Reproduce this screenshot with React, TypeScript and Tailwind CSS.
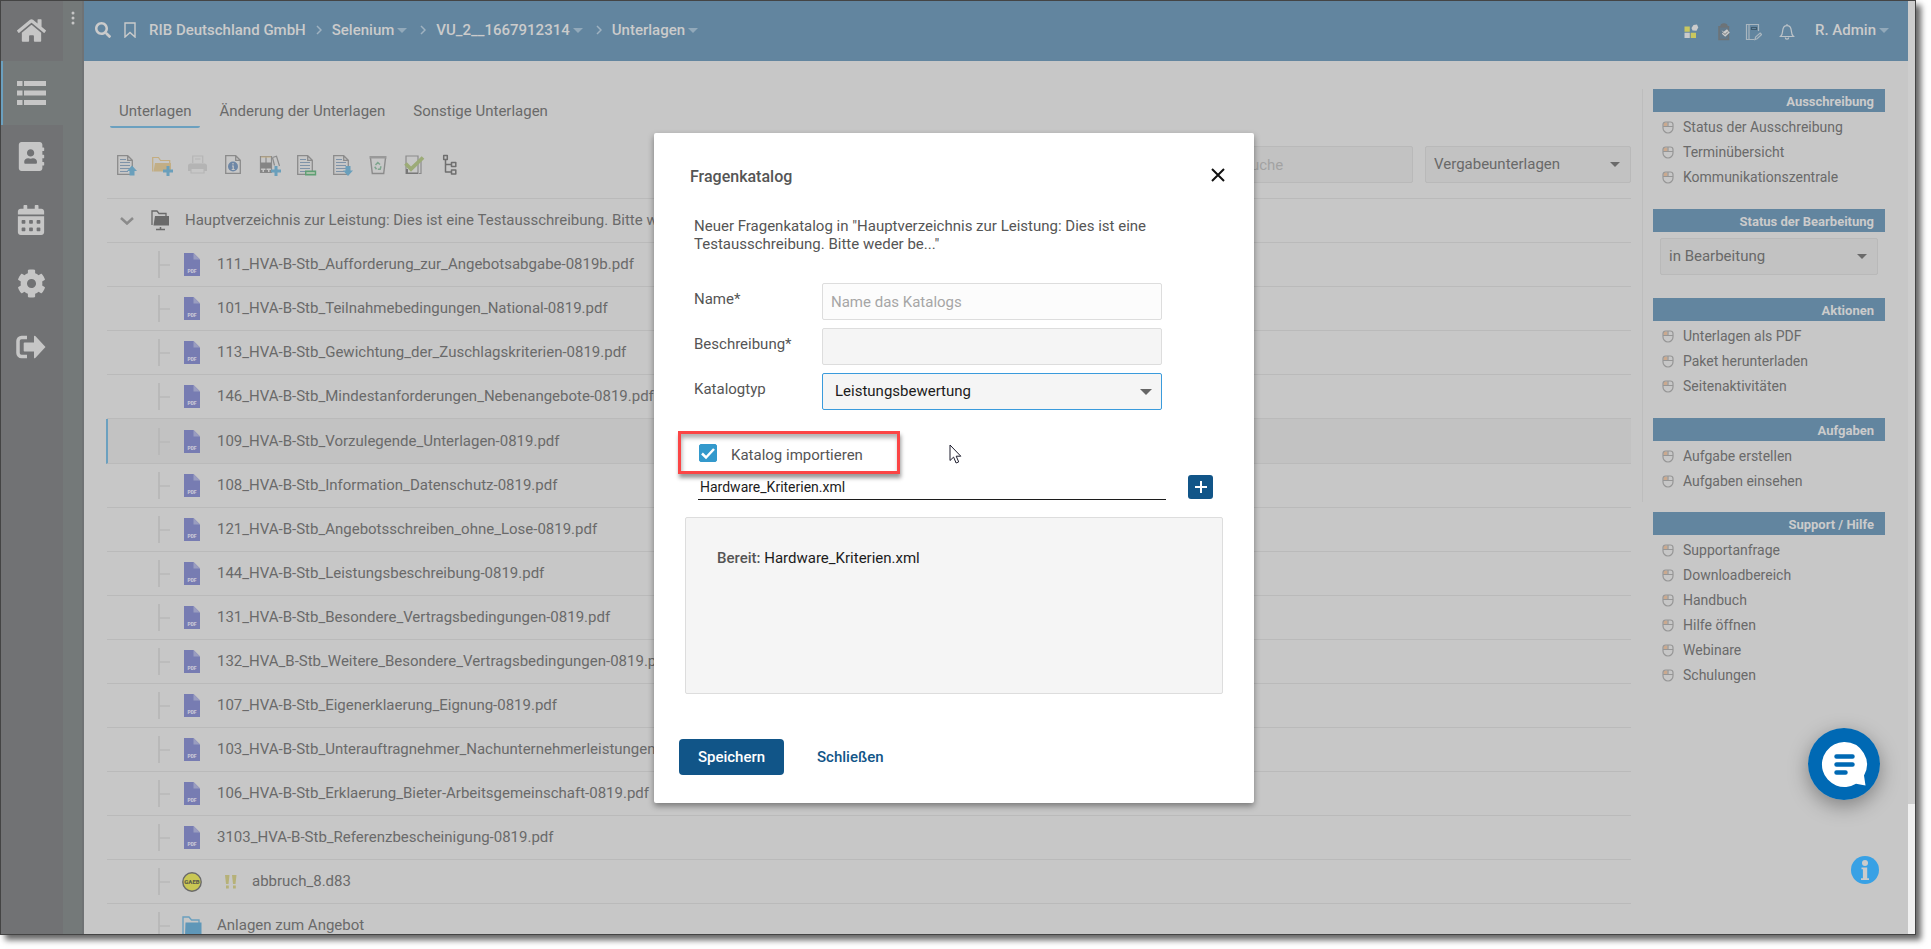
import { useState, type ReactNode } from 'react';
import { FaAddressBook, FaCalendarAlt, FaCog, FaHome, FaSearch } from 'react-icons/fa';

const files = [
  '111_HVA-B-Stb_Aufforderung_zur_Angebotsabgabe-0819b.pdf',
  '101_HVA-B-Stb_Teilnahmebedingungen_National-0819.pdf',
  '113_HVA-B-Stb_Gewichtung_der_Zuschlagskriterien-0819.pdf',
  '146_HVA-B-Stb_Mindestanforderungen_Nebenangebote-0819.pdf',
  '109_HVA-B-Stb_Vorzulegende_Unterlagen-0819.pdf',
  '108_HVA-B-Stb_Information_Datenschutz-0819.pdf',
  '121_HVA-B-Stb_Angebotsschreiben_ohne_Lose-0819.pdf',
  '144_HVA-B-Stb_Leistungsbeschreibung-0819.pdf',
  '131_HVA-B-Stb_Besondere_Vertragsbedingungen-0819.pdf',
  '132_HVA_B-Stb_Weitere_Besondere_Vertragsbedingungen-0819.pdf',
  '107_HVA-B-Stb_Eigenerklaerung_Eignung-0819.pdf',
  '103_HVA-B-Stb_Unterauftragnehmer_Nachunternehmerleistungen-08',
  '106_HVA-B-Stb_Erklaerung_Bieter-Arbeitsgemeinschaft-0819.pdf',
  '3103_HVA-B-Stb_Referenzbescheinigung-0819.pdf',
];

const activeFile = 4;

function Caret({ className }: { className?: string }) {
  return (
    <svg viewBox="0 0 10 5" className={`h-[5px] w-2.5 ${className ?? ''}`}>
      <path d="M0 0h10L5 5z" fill="currentColor" />
    </svg>
  );
}

/* ---------- sidebar ---------- */

function ListIcon() {
  return (
    <svg viewBox="0 0 30 26" className="h-[26px] w-[30px]" fill="currentColor">
      <path d="M1 1h5.500v5H1zM1 10.500h5.500v5H1zM1 20h5.500v5H1zM8 1h22v5H8zM8 10.500h22v5H8zM8 20h22v5H8z" />
    </svg>
  );
}

function LogoutIcon() {
  return (
    <svg viewBox="0 0 30 24" className="h-6 w-[30px]">
      <path d="M11 2.500H5.500A3.500 3.500 0 0 0 2 6v12a3.500 3.500 0 0 0 3.500 3.500H11" fill="none" stroke="currentColor" strokeWidth="3.500" />
      <path d="M8.500 7.500h9.500V1.500q0-1.500 1.300-.4L29.500 12 19.300 22.900q-1.300 1.100-1.300-.4v-6H8.500q-.8 0-.8-.8V8.300q0-.8.800-.8z" fill="currentColor" />
    </svg>
  );
}

function Sidebar() {
  return (
    <div className="flex shrink-0">
      <nav className="flex w-[62px] flex-col bg-[#717274] text-[#c6c6c6]">
        <button aria-label="Start" className="flex h-[60px] items-center justify-center pr-0.5 pb-0.5">
          <FaHome size={29} />
        </button>
        <button aria-label="Liste" className="flex h-16 items-center justify-center border-l-2 border-[#6ba0bf] bg-[#747979] pr-1">
          <ListIcon />
        </button>
        <button aria-label="Adressbuch" className="flex h-[63px] items-center justify-center pr-0.5">
          <FaAddressBook size={29} />
        </button>
        <button aria-label="Kalender" className="flex h-16 items-center justify-center pr-0.5">
          <FaCalendarAlt size={30} />
        </button>
        <button aria-label="Einstellungen" className="flex h-[63px] items-center justify-center pr-0.5">
          <FaCog size={29} />
        </button>
        <button aria-label="Abmelden" className="flex h-[63px] items-center justify-center pr-0.5">
          <LogoutIcon />
        </button>
      </nav>
      <div className="flex w-[21px] justify-center border-r-2 border-[#6f7274] bg-[#747979] pt-2.5 text-[#c6c6c6]">
        <svg viewBox="0 0 4 14" className="h-3.5 w-1" fill="currentColor">
          <circle cx="2" cy="2" r="1.500" />
          <circle cx="2" cy="7" r="1.500" />
          <circle cx="2" cy="12" r="1.500" />
        </svg>
      </div>
    </div>
  );
}

/* ---------- header ---------- */

function CrumbArrow() {
  return (
    <svg viewBox="0 0 6 10" className="h-2.5 w-1.5 text-[#9fb2c0]" fill="none" stroke="currentColor" strokeWidth="1.500">
      <path d="M1 1l4 4-4 4" />
    </svg>
  );
}

function Header() {
  return (
    <header className="flex h-[60px] shrink-0 items-center bg-[#62859f] pr-[19px] pb-0.5 pl-[11px] text-[15px] font-medium text-[#cbcbcb]">
      <button aria-label="Suchen">
        <FaSearch size={16} />
      </button>
      <button aria-label="Lesezeichen" className="ml-3">
        <svg viewBox="0 0 14 16" className="h-4 w-3.5" fill="none" stroke="currentColor" strokeWidth="1.400">
          <path d="M2 1h10v14l-5-4.500L2 15z" />
        </svg>
      </button>
      <nav className="ml-3 flex items-center gap-2.5 whitespace-nowrap">
        <a href="#firma">RIB Deutschland GmbH</a>
        <CrumbArrow />
        <a href="#selenium" className="flex items-center gap-[3px]">
          Selenium <Caret className="mr-[3px] text-[#92a9ba]" />
        </a>
        <CrumbArrow />
        <a href="#vu" className="flex items-center gap-[3px]">
          VU_2__1667912314 <Caret className="mr-[3px] text-[#92a9ba]" />
        </a>
        <CrumbArrow />
        <a href="#unterlagen" className="flex items-center gap-[3px]">
          Unterlagen <Caret className="text-[#92a9ba]" />
        </a>
      </nav>
      <div className="ml-auto flex items-center">
        <button aria-label="Apps" className="mr-[18px] pt-1">
          <svg viewBox="0 0 16 16" className="size-4">
            <path d="M1.500 2.500h5.300v5.300H1.500zM7.700 8.700H13V14H7.700z" fill="#c9c75f" />
            <path d="M1.500 8.700h5.300V14H1.500z" fill="#cbcbcb" />
            <path d="M10.500 1l3.500-.5 1.300 3-1.800 3.300-4-.3-1-2.500z" fill="#cbcbcb" />
          </svg>
        </button>
        <button aria-label="Aufgaben" className="mr-3.5 pt-1">
          <svg viewBox="0 0 14 18" className="h-[18px] w-3.5">
            <path d="M4 3.500V2.800a3 2 0 0 1 6 0v.7" fill="#6d7377" stroke="#6d7377" strokeWidth="1.200" />
            <path d="M2 3.800h9.500v12.700H2z" fill="#62798b" stroke="#6d7377" strokeWidth="1.500" />
            <path d="M4.500 7l2 1.700 3.500-2.400 2.800 3.200-4.600 4.300-3.400-3 1.300-1.200z" fill="#cbcbcb" />
            <path d="M6 9.500l2 2 3-3" fill="none" stroke="#6d7377" />
          </svg>
        </button>
        <button aria-label="Notizen" className="mr-[17px] pt-1">
          <svg viewBox="0 0 17 18" className="h-[18px] w-[17px]" fill="none" stroke="#a9b6bf" strokeWidth="1.200">
            <path d="M13.500 8V1.500h-12v15h8M4 1.500v15" />
            <path d="M6.500 4.500h5v2h-5z" stroke="#3f5a6d" />
            <path d="M10 16.500l.6-2.500 4.500-4 1.500 1.500-4.500 4.300z" />
          </svg>
        </button>
        <button aria-label="Benachrichtigungen" className="mr-5 pt-1">
          <svg viewBox="0 0 16 18" className="h-[18px] w-4" fill="none" stroke="#bcc3c8" strokeWidth="1.200">
            <path d="M8 1v1.500M1.500 13.500c2-1.800 2-3 2.200-6C4 4.500 5.600 2.600 8 2.600s4 1.900 4.300 4.900c.2 3 .2 4.200 2.200 6zM6.300 14.500a1.700 1.700 0 0 0 3.400 0" />
          </svg>
        </button>
        <button className="flex items-center gap-[3px]">
          R. Admin <Caret className="text-[#92a9ba]" />
        </button>
      </div>
    </header>
  );
}

/* ---------- toolbar ---------- */

function Sheet() {
  return (
    <>
      <path d="M2.700 1.700h10l4.600 4.600v14h-14.600zM12.700 1.700v4.600h4.600" fill="none" stroke="#8b8b8b" strokeWidth="1.300" />
      <path d="M5 5.500h6M5 8.500h10M5 11.500h10M5 14.500h10M5 17.500h8" stroke="#7f93a8" strokeWidth="1.200" />
    </>
  );
}

const tools: { label: string; icon: ReactNode }[] = [
  {
    label: 'Hochladen',
    icon: (
      <>
        <Sheet />
        <path d="M17 11.500l5 5.500h-2.500v4.500h-5V17H12z" fill="#6a9fbb" />
      </>
    ),
  },
  {
    label: 'Neuer Ordner',
    icon: (
      <>
        <path d="M1.700 17.500V3.500h5.800l2 3h9.200v2.500" fill="none" stroke="#c4ad80" strokeWidth="1.200" />
        <path d="M4 9h16v8.500H2.500z" fill="#c2ae85" />
        <path d="M15.500 12h3v3.500H22v3h-3.500V22h-3v-3.500H12v-3h3.500z" fill="#6a9fbb" />
      </>
    ),
  },
  {
    label: 'Drucken',
    icon: (
      <>
        <path d="M5.700 9V2h10v7M8 5h5.500" fill="none" stroke="#b6b6b6" strokeWidth="1.200" />
        <path d="M3.500 9.500h14a2.500 2.500 0 0 1 2.500 2.500v5h-3v-2H4v2H1v-5a2.500 2.500 0 0 1 2.500-2.500z" fill="#b4b4b4" />
        <path d="M4 15v4h13v-4" fill="none" stroke="#b6b6b6" strokeWidth="1.200" />
      </>
    ),
  },
  {
    label: 'Information',
    icon: (
      <>
        <path d="M2.700 1.700h10l4.600 4.600v13h-14.600zM12.700 1.700v4.600h4.600" fill="none" stroke="#8b8b8b" strokeWidth="1.300" />
        <circle cx="10" cy="12.500" r="5" fill="#6e87a6" />
        <path d="M10 9v1.500M9 12h1.200v3.500M8.700 15.500h3" stroke="#c7c7c7" strokeWidth="1.200" fill="none" />
      </>
    ),
  },
  {
    label: 'Katalog anlegen',
    icon: (
      <>
        <path d="M1.500 2.500H7v16H1.500zM7 2.500h5.500v16H7z" fill="none" stroke="#8b8b8b" strokeWidth="1.200" />
        <path d="M1.500 8.500h11v6h-11z" fill="#858585" />
        <path d="M1.500 16h2v2.500h-2zM5 16h4v2.500H5zM10.500 16h2v2.500h-2z" fill="#858585" />
        <path d="M2 3h10" stroke="#c4ad80" />
        <path d="M13.500 3.500l4-1.200 3 9.700M13.500 3.500l2 8" fill="none" stroke="#8b8b8b" strokeWidth="1.200" />
        <path d="M15.500 12h3v3.500H22v3h-3.500V22h-3v-3.500H12v-3h3.500z" fill="#6a9fbb" />
      </>
    ),
  },
  {
    label: 'Leistungsverzeichnis',
    icon: (
      <>
        <Sheet />
        <path d="M10.700 17.200h9.800v3.600h-9.800z" fill="#a9c0a9" stroke="#5f9f74" strokeWidth="1.400" />
      </>
    ),
  },
  {
    label: 'Herunterladen',
    icon: (
      <>
        <Sheet />
        <path d="M17 22l5-5.500h-2.500V12h-5v4.500H12z" fill="#6a9fbb" />
      </>
    ),
  },
  {
    label: 'Papierkorb',
    icon: (
      <>
        <path d="M3.500 4l1.800 15.500h11.400L18.500 4" fill="none" stroke="#8b8b8b" strokeWidth="1.400" />
        <path d="M2.500 2h17v2.500h-17z" fill="#999" />
        <path d="M8.500 11l2.300-2.500 2.200 2M14 12.200l-.8 3h-2.400M9.500 15.200l-1.800-2.400" fill="none" stroke="#7ea58e" strokeWidth="1.500" />
      </>
    ),
  },
  {
    label: 'Prüfen',
    icon: (
      <>
        <path d="M3 2h12v17.500H3zM18 6v13.500h-2" fill="none" stroke="#8b8b8b" strokeWidth="1.200" />
        <path d="M3 15h2v4H3zM3 18.500h12V20H3z" fill="#777" />
        <path d="M2.500 9.500L8 15 20 3.500" fill="none" stroke="#9cab77" strokeWidth="3.800" />
      </>
    ),
  },
  {
    label: 'Struktur',
    icon: (
      <path
        d="M4.700 1.500h3.600v4H4.700zM12.500 8.500h4.300v4h-4.300zM12.500 16h4.300v4h-4.300zM6.500 5.500V18h6M6.500 10.500h6"
        fill="none"
        stroke="#6f6f6f"
        strokeWidth="1.500"
        strokeLinejoin="round"
      />
    ),
  },
];

function Toolbar() {
  return (
    <div className="mt-[18px] flex h-[37px] items-center pl-px">
      {tools.map((t) => (
        <button key={t.label} aria-label={t.label} className="flex w-9 justify-center">
          <svg viewBox="0 0 22 22" className="size-[22px]">
            {t.icon}
          </svg>
        </button>
      ))}
      <input
        type="search"
        aria-label="Suche"
        placeholder="Suche"
        className="ml-auto h-full w-[181px] rounded-xs border border-[#b9b9b9] bg-[#c2c2c2] px-[9px] text-[15px] placeholder:text-[#a2a2a2]"
      />
      <div className="relative ml-3 h-full w-[206px]">
        <select
          aria-label="Kategorie"
          className="h-full w-full appearance-none rounded-xs border border-[#b9b9b9] bg-[#c2c2c2] px-2 text-[15px] text-[#696969]"
        >
          <option>Vergabeunterlagen</option>
        </select>
        <Caret className="pointer-events-none absolute top-4 right-[11px] text-[#6a6a6a]" />
      </div>
    </div>
  );
}

/* ---------- tree ---------- */

function Branch() {
  return (
    <svg viewBox="0 0 12 27" className="mr-3 h-[27px] w-3 shrink-0" stroke="#b9b9b9">
      <path d="M1 0v27" strokeWidth="2" />
      <path d="M1 14h11" strokeWidth="1.500" />
    </svg>
  );
}

function PdfIcon() {
  return (
    <svg viewBox="0 0 16 23" className="mx-0.5 h-[23px] w-4 shrink-0">
      <path d="M0 0h9.500L16 6.500V23H0z" fill="#777cb2" />
      <path d="M9.500 0L16 6.500H9.500z" fill="#9a9dc0" />
      <text x="8" y="19.500" textAnchor="middle" fontSize="5" fontWeight="900" fill="#c7c7d6">
        PDF
      </text>
    </svg>
  );
}

function GaebIcon() {
  return (
    <svg viewBox="0 0 20 20" className="size-5 shrink-0">
      <circle cx="10" cy="10" r="9.200" fill="#c9c754" stroke="#6a6a6a" strokeWidth="1.400" />
      <text x="10" y="12.300" textAnchor="middle" fontSize="6" fontWeight="900" fill="#5d5d4a">
        GAEB
      </text>
    </svg>
  );
}

function FileRow({ active, icon, children }: { active?: boolean; icon: ReactNode; children: ReactNode }) {
  return (
    <li
      className={
        active
          ? '-ml-px flex h-[45px] items-center border-b border-l-2 border-b-[#bababa] border-l-[#6ba0bf] bg-[#c2c2c2] pl-[50px]'
          : 'flex h-11 items-center border-b border-[#bababa] pl-[51px]'
      }
    >
      <Branch />
      {icon}
      <a href="#datei" className="ml-[15px]">
        {children}
      </a>
    </li>
  );
}

function Tree() {
  return (
    <ul className="mt-[15px] border-t border-[#bababa] text-[15px] whitespace-nowrap">
      <li className="flex h-11 items-center border-b border-[#bababa] pl-[13px]">
        <button aria-label="Zuklappen">
          <svg viewBox="0 0 14 8" className="h-2 w-3.5" fill="none" stroke="#8b8b8b" strokeWidth="2.500">
            <path d="M1 1l6 5.500L13 1" />
          </svg>
        </button>
        <svg viewBox="0 0 18 21" className="ml-[17px] h-[21px] w-[18px]">
          <path d="M1 15V1h5l2 2.500h7V6" fill="none" stroke="#6a6a6a" strokeWidth="1.300" />
          <path d="M4 6h14v9.500H2.500z" fill="#6a6a6a" />
          <path d="M9.500 17v3M5 19.500h9" stroke="#6a6a6a" strokeWidth="1.500" />
        </svg>
        <a href="#ordner" className="ml-4">
          Hauptverzeichnis zur Leistung: Dies ist eine Testausschreibung. Bitte weder be...
        </a>
      </li>
      {files.map((name, i) => (
        <FileRow key={name} active={i === activeFile} icon={<PdfIcon />}>
          {name}
        </FileRow>
      ))}
      <FileRow
        icon={
          <>
            <GaebIcon />
            <svg viewBox="0 0 12 14" className="ml-[23px] h-3.5 w-3 shrink-0" fill="#b6b178">
              <path d="M0 0h4.500L3.500 9H1zM7 0h4.500l-1 9H8zM1 10.500h2.800V13.500H1zM8 10.500h2.800V13.500H8z" />
            </svg>
          </>
        }
      >
        abbruch_8.d83
      </FileRow>
      <FileRow
        icon={
          <svg viewBox="0 0 20 20" className="size-5 shrink-0">
            <path d="M1 19V1h6l2.500 3H17v3" fill="none" stroke="#6ba0bf" strokeWidth="1.400" />
            <path d="M3.500 6.500H19.500V20H3z" fill="#5f97b8" />
          </svg>
        }
      >
        Anlagen zum Angebot
      </FileRow>
    </ul>
  );
}

/* ---------- right column ---------- */

function MouseIcon() {
  return (
    <svg viewBox="0 0 12 13" className="h-[13px] w-3 shrink-0" fill="none" stroke="#969696" strokeWidth="1.200">
      <path d="M1.500 1.500h4v3.500h-4z" fill="#cba98e" stroke="none" />
      <path d="M3.500 1h5A2.500 2.500 0 0 1 11 3.500V7a5 5 0 0 1-10 0V3.500A2.500 2.500 0 0 1 3.500 1zM1 5.500h10M6 1v4.500" />
    </svg>
  );
}

function Panel({ title, links, children }: { title: string; links?: string[]; children?: ReactNode }) {
  return (
    <section>
      <h2 className="h-[23px] bg-[#62859f] pr-[11px] text-right text-[13px] leading-[25px] font-bold text-[#cbcbcb]">
        {title}
      </h2>
      {links && (
        <ul className="mt-[3px] text-[14px]">
          {links.map((link) => (
            <li key={link}>
              <a href="#link" className="flex h-[25px] items-center gap-[9px] pl-[9px]">
                <MouseIcon />
                {link}
              </a>
            </li>
          ))}
        </ul>
      )}
      {children}
    </section>
  );
}

function RightColumn() {
  return (
    <aside className="mt-7 mr-[23px] ml-[11px] w-[243px] shrink-0">
      <div className="flex flex-col gap-[19px] border-l border-[#bdbdbd] pb-2 pl-2.5">
        <Panel title="Ausschreibung" links={['Status der Ausschreibung', 'Terminübersicht', 'Kommunikationszentrale']} />
        <Panel title="Status der Bearbeitung">
          <div className="relative mx-[7px] mt-1.5 mb-1 h-[37px]">
            <select
              aria-label="Status der Bearbeitung"
              className="h-full w-full appearance-none rounded-xs border border-[#b9b9b9] bg-[#c2c2c2] px-2 text-[15px] text-[#696969]"
            >
              <option>in Bearbeitung</option>
            </select>
            <Caret className="pointer-events-none absolute top-4 right-[11px] text-[#6a6a6a]" />
          </div>
        </Panel>
        <Panel title="Aktionen" links={['Unterlagen als PDF', 'Paket herunterladen', 'Seitenaktivitäten']} />
        <Panel title="Aufgaben" links={['Aufgabe erstellen', 'Aufgaben einsehen']} />
      </div>
      <div className="mt-2.5 pl-[11px]">
        <Panel
          title="Support / Hilfe"
          links={['Supportanfrage', 'Downloadbereich', 'Handbuch', 'Hilfe öffnen', 'Webinare', 'Schulungen']}
        />
      </div>
    </aside>
  );
}

/* ---------- dialog ---------- */

function Dialog() {
  const [checked, setChecked] = useState(true);

  return (
    <div className="absolute inset-0 right-2 flex items-center justify-center pt-px">
      <div
        role="dialog"
        aria-labelledby="dialog-title"
        className="relative w-[600px] rounded-xs bg-white pb-7 text-[15px] text-[#555] shadow-[0_3px_6px_rgba(0,0,0,0.4)]"
      >
        <div className="flex h-[84px] items-center justify-between pr-[29px] pl-9">
          <h1 id="dialog-title" className="pt-1 text-[16px] font-medium">
            Fragenkatalog
          </h1>
          <button aria-label="Schließen">
            <svg viewBox="0 0 14 14" className="size-3.5" stroke="#111" strokeWidth="2">
              <path d="M1 1l12 12M13 1L1 13" />
            </svg>
          </button>
        </div>

        <p className="mr-[90px] ml-10 leading-[18px]">
          Neuer Fragenkatalog in "Hauptverzeichnis zur Leistung: Dies ist eine Testausschreibung. Bitte weder be..."
        </p>

        <div className="mt-[30px] mr-[92px] ml-10 grid grid-cols-[128px_1fr] gap-y-2">
          <label htmlFor="name" className="leading-8">
            Name*
          </label>
          <input
            id="name"
            placeholder="Name das Katalogs"
            className="h-[37px] rounded-xs border border-[#ddd] bg-[#fcfcfc] px-2 placeholder:text-[#a6a6a6]"
          />
          <label htmlFor="beschreibung" className="leading-8">
            Beschreibung*
          </label>
          <input id="beschreibung" className="h-[37px] rounded-xs border border-[#ddd] bg-[#f5f5f5] px-2" />
          <label htmlFor="typ" className="leading-8">
            Katalogtyp
          </label>
          <div className="relative">
            <select
              id="typ"
              className="h-[37px] w-full appearance-none rounded-xs border border-[#3a9bdc] bg-[#f5f5f5] px-3 text-[#1c1c1c]"
            >
              <option>Leistungsbewertung</option>
            </select>
            <Caret className="pointer-events-none absolute top-4 right-2.5 h-1.5! w-3! text-[#666]" />
          </div>
        </div>

        <label className="mt-[21px] ml-6 flex h-[43px] w-[222px] items-center border-3 border-[#fb4545] pl-[18px] shadow-[1px_4px_4px_rgba(0,0,0,0.4),inset_1px_4px_4px_rgba(0,0,0,0.3)]">
          <span className="relative size-[18px]">
            <input
              type="checkbox"
              checked={checked}
              onChange={(e) => setChecked(e.target.checked)}
              className="block size-[18px] appearance-none rounded-xs border border-[#3399cc] checked:bg-[#3399cc]"
            />
            {checked && (
              <svg viewBox="0 0 18 18" className="pointer-events-none absolute inset-0" fill="none" stroke="#fff" strokeWidth="2.500">
                <path d="M3 9.500l4 4 8-8.500" />
              </svg>
            )}
          </span>
          <span className="ml-3.5 pt-1.5">Katalog importieren</span>
        </label>

        <div className="mt-px mr-[41px] ml-11 flex h-6 items-center justify-between">
          <input
            aria-label="Datei"
            readOnly
            value="Hardware_Kriterien.xml"
            className="mt-px h-6 w-[468px] border-b border-[#1c1c1c] px-0.5 text-[14px] text-[#1c1c1c]"
          />
          <button aria-label="Datei hinzufügen" className="flex h-6 w-[25px] items-center justify-center rounded-[3px] bg-[#115588]">
            <svg viewBox="0 0 12 12" className="size-3" stroke="#fff" strokeWidth="2">
              <path d="M6 0v12M0 6h12" />
            </svg>
          </button>
        </div>

        <div className="mt-[18px] mr-[31px] ml-[31px] h-[177px] rounded-xs border border-[#ddd] bg-[#f5f5f5] px-[31px] pt-[31px] leading-[18px]">
          <span className="font-medium">Bereit:</span> <span className="text-[#1c1c1c]">Hardware_Kriterien.xml</span>
        </div>

        <div className="mt-[45px] ml-[25px] flex font-medium">
          <button className="h-9 w-[105px] rounded-sm bg-[#115588] text-white">Speichern</button>
          <button className="ml-[17px] h-9 px-4 text-[#115588]">Schließen</button>
        </div>

        {/* mouse pointer */}
        <svg viewBox="0 0 13 20" className="pointer-events-none absolute top-[311px] left-[295px] h-5 w-[13px]">
          <path d="M1 1v15.500l3.600-3.400 2.500 5.900 2.600-1.100-2.500-5.700h4.600z" fill="#fff" stroke="#1c1c2c" />
        </svg>
      </div>
    </div>
  );
}

export default function App() {
  return (
    <div className="h-screen bg-white pr-[15px] pb-3.5 font-['Roboto',sans-serif] text-[#6a6a6a]">
      <div className="relative h-full border border-[#444] shadow-[5px_5px_6px_rgba(0,0,0,0.6)]">
        <div className="flex h-full overflow-hidden bg-[#c7c7c7]">
          <Sidebar />
          <div className="flex min-w-0 flex-1 flex-col">
            <Header />
            <div className="flex min-h-0 flex-1">
              <main className="min-w-0 flex-1 pt-[29px] pl-[23px]">
                <nav className="ml-[3px] flex gap-2.5 text-[15px]">
                  <a href="#tab1" className="flex h-[38px] items-center rounded-b-xs border-b-2 border-[#6ba0bf] px-[9px] pt-1.5">
                    Unterlagen
                  </a>
                  <a href="#tab2" className="flex h-[38px] items-center border-b-2 border-transparent px-[9px] pt-1.5">
                    Änderung der Unterlagen
                  </a>
                  <a href="#tab3" className="flex h-[38px] items-center border-b-2 border-transparent px-[9px] pt-1.5">
                    Sonstige Unterlagen
                  </a>
                </nav>
                <Toolbar />
                <Tree />
              </main>
              <RightColumn />
            </div>
          </div>
          {/* scrollbar */}
          <div className="flex w-[7px] shrink-0 flex-col bg-[#cdcdcd]">
            <div className="mt-auto h-[130px] bg-[#f0f0f0]" />
          </div>
        </div>

        <Dialog />

        <button aria-label="Chat" className="absolute right-[35px] bottom-[134px] rounded-full shadow-[0_6px_20px_rgba(0,0,0,0.35)]">
          <svg viewBox="0 0 72 72" className="block size-[72px]">
            <circle cx="36" cy="36" r="36" fill="#0069b4" />
            <path d="M36 14a22.500 22.500 0 1 0 12 41.800l9.500 1.700-1.500-10A22.500 22.500 0 0 0 36 14z" fill="#fff" />
            <path d="M28.500 28.500h16M28.500 36.500h16M28.500 44.500h9" stroke="#0069b4" strokeWidth="4.500" strokeLinecap="round" />
          </svg>
        </button>
        <button aria-label="Information" className="absolute right-9 bottom-[50px]">
          <svg viewBox="0 0 28 28" className="block size-7">
            <circle cx="14" cy="14" r="14" fill="#38a1e5" />
            <circle cx="14" cy="7" r="3" fill="#cbcbcb" />
            <path d="M10.500 11.500h5.700v10.800H18V24h-8v-1.700h1.900v-9h-1.400z" fill="#cbcbcb" />
          </svg>
        </button>
      </div>
    </div>
  );
}
